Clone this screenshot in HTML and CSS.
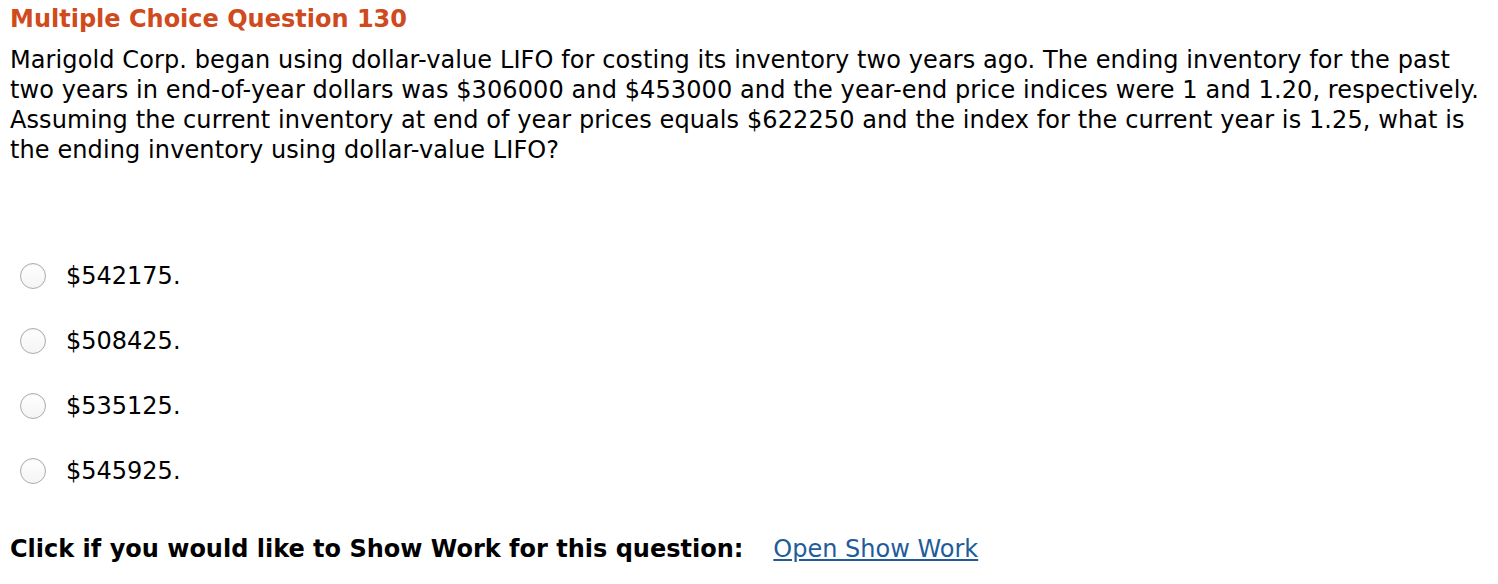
FILE: index.html
```html
<!DOCTYPE html>
<html>
<head>
<meta charset="utf-8">
<link rel="stylesheet" href="styles.css">
</head>
<body>
<div class="page">
  <h1 class="title">Multiple Choice Question 130</h1>
  <p class="question">Marigold Corp. began using dollar-value LIFO for costing its inventory two years ago. The ending inventory for the past two years in end-of-year dollars was $306000 and $453000 and the year-end price indices were 1 and 1.20, respectively. Assuming the current inventory at end of year prices equals $622250 and the index for the current year is 1.25, what is the ending inventory using dollar-value LIFO?</p>
  <ul class="options">
    <li class="option"><span class="radio"></span><span class="label">$542175.</span></li>
    <li class="option"><span class="radio"></span><span class="label">$508425.</span></li>
    <li class="option"><span class="radio"></span><span class="label">$535125.</span></li>
    <li class="option"><span class="radio"></span><span class="label">$545925.</span></li>
  </ul>
  <div class="showwork">
    <span class="sw-label">Click if you would like to Show Work for this question:</span>
    <a class="sw-link" href="#">Open Show Work</a>
  </div>
</div>
</body>
</html>
```

FILE: styles.css
```css
html, body {
  margin: 0;
  padding: 0;
  background: #ffffff;
}
body {
  font-family: "DejaVu Sans", Verdana, sans-serif;
  color: #000000;
}
.page {
  padding: 4px 10px 0 10px;
}
.title {
  margin: 0;
  font-size: 24px;
  line-height: 30px;
  font-weight: bold;
  color: #cf4a1c;
}
.question {
  margin: 11px 0 0 0;
  font-size: 24px;
  line-height: 30px;
  letter-spacing: 0.1px;
  width: 1482px;
}
.options {
  list-style: none;
  margin: 96px 0 0 0;
  padding: 0;
  display: flex;
  flex-direction: column;
  gap: 35px;
}
.option {
  display: flex;
  align-items: center;
  height: 30px;
}
.radio {
  width: 26px;
  height: 26px;
  box-sizing: border-box;
  border-radius: 50%;
  border: 1px solid #ababab;
  background: linear-gradient(#ffffff, #f4f4f4);
  box-shadow: inset 0 1px 1px rgba(0,0,0,0.06);
  margin-left: 10px;
  margin-right: 20px;
}
.label {
  font-size: 24px;
}
.showwork {
  margin-top: 48px;
  display: flex;
  align-items: center;
  gap: 30px;
  font-size: 24px;
  line-height: 30px;
}
.sw-label {
  font-weight: bold;
}
.sw-link {
  color: #1f5c99;
  text-decoration: underline;
}
```
